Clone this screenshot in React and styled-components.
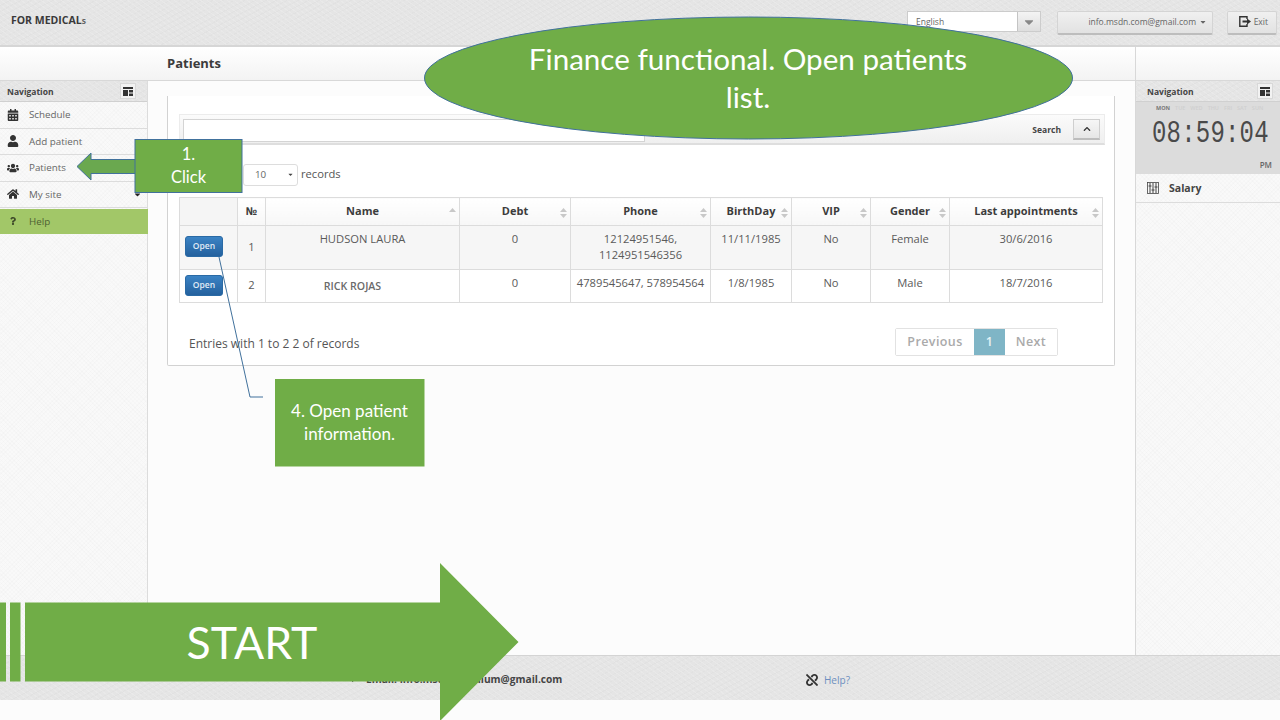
import React from "react";
import styled, { createGlobalStyle, css } from "styled-components";
import { FaCalendarAlt, FaUser, FaUsers, FaHome, FaQuestion, FaUnlink, FaChevronUp, FaCaretDown, FaCaretRight } from "react-icons/fa";

const Global = createGlobalStyle`
  html, body { margin: 0; padding: 0; background: #fcfcfc; }
  * { box-sizing: border-box; }
  body { font-family: "Open Sans", "Liberation Sans", sans-serif; color: #444; }
`;
const paper = css`
  background-color: #e5e5e5;
  background-image:
    repeating-linear-gradient(37deg, rgba(255,255,255,.16) 0 1px, transparent 1px 4px),
    repeating-linear-gradient(-28deg, rgba(0,0,0,.014) 0 1px, transparent 1px 5px);
`;
const weave = css`
  background-color: #f9f9f9;
  background-image:
    repeating-linear-gradient(45deg, rgba(0,0,0,.012) 0 1px, transparent 1px 3px),
    repeating-linear-gradient(-45deg, rgba(0,0,0,.012) 0 1px, transparent 1px 3px);
`;
const Page = styled.div`
  position: relative; width: 1280px; height: 720px; overflow: hidden; background: #fcfcfc;
  display: flex; flex-direction: column;
`;
const Header = styled.header`
  height: 47px; flex: none; ${paper}; border-bottom: 2px solid #d6d6d6;
  display: flex; align-items: flex-start; padding: 11px 3px 0 11px;
`;
const Brand = styled.div`
  font-size: 10.5px; font-weight: 700; color: #3a3a3a; line-height: 19px; margin-right: auto;
  small { font-size: 8.5px; color: #666; }
`;
const LangSelect = styled.div`
  width: 134px; height: 21px; background: #fff; border: 1px solid #ccc; display: flex; align-items: center;
  margin-right: 16px; font-size: 8.5px; color: #666; padding-left: 8px;
  span { flex: 1; }
`;
const LangArrow = styled.div`
  width: 23px; height: 100%; background: linear-gradient(#f4f4f4, #dedede); border-left: 1px solid #c4c4c4;
  display: flex; align-items: center; justify-content: center; color: #888; font-size: 14px;
`;
const HeadButton = styled.div`
  width: ${p => p.$w}px; height: 24px; margin-right: ${p => p.$mr || 0}px;
  background: linear-gradient(#f0f0f0, #e2e2e2); border: 1px solid #d4d4d4; border-bottom: 2px solid #bdbdbd; border-radius: 2px;
  display: flex; align-items: center; justify-content: flex-end; gap: 3px; padding: 0 ${p => p.$pr}px 2px 0;
  font-size: 8.5px; color: #666;
`;
const Body = styled.div`
  flex: none; height: 608px; display: grid; grid-template-columns: 1135px 145px;
`;
const LeftArea = styled.div`display: flex; flex-direction: column; min-width: 0;`;
const TitleBar = styled.div`
  height: 34px; flex: none; background: linear-gradient(#fff, #f3f3f3); border-bottom: 1px solid #d8d8d8;
  padding-left: 167px; font-size: 13px; font-weight: 700; color: #3c3c3c; line-height: 32px;
`;
const Columns = styled.div`flex: 1; display: flex; min-height: 0;`;
const Sidebar = styled.nav`
  width: 148px; flex: none; ${weave}; border-right: 1px solid #dcdcdc;
`;
const NavHead = styled.div`
  height: 21px; ${paper}; border-bottom: 1px solid #d0d0d0; display: flex; align-items: center; justify-content: space-between;
  padding: 0 ${p => p.$pr}px 0 ${p => p.$pl}px; font-size: 8.5px; font-weight: 700; color: #444;
`;
const Toggle = styled.div`
  width: 16px; height: 16px; background: #f2f2f2; border: 1px solid #d8d8d8; display: flex; align-items: center; justify-content: center;
`;
const NavItem = styled.div`
  height: ${p => p.$h || 26.5}px; display: flex; align-items: center; padding-left: 7px; gap: 10px;
  border-bottom: 1px solid #dcdcdc; font-size: 9.8px; color: ${p => p.$active ? "#4e5f33" : "#666"};
  background: ${p => p.$active ? "#a2c768" : "transparent"};
  border-color: ${p => p.$active ? "#a2c768" : "#dcdcdc"};
  margin-top: ${p => p.$mt || 0}px; margin-right: ${p => p.$active ? -1 : 0}px;
`;
const NavIcon = styled.span`
  flex: none; display: flex; width: 12px; height: 12px; align-items: center; justify-content: center;
  svg { width: ${p => p.$size || 12}px; height: ${p => p.$size || 12}px; color: ${p => p.$dark ? "#3f4a2a" : "#333"}; }
`;
const NavCaret = styled(FaCaretDown)`
  margin-left: auto; margin-right: 5px; width: 9px; height: 9px; color: #222;
`;
const Main = styled.main`flex: 1; min-width: 0; background: #fcfcfc; padding: 15px 20px 0 19px;`;
const Panel = styled.section`
  height: 270px; background: #fff; border: 1px solid #d2d2d2; border-top: none; border-radius: 0 0 2px 2px; padding: 18px 11px 0 11px;
`;
const SearchBar = styled.div`
  width: 926px; height: 31px; background: linear-gradient(#fbfbfb, #efefef); border: 1px solid #ececec; border-bottom: 2px solid #dedede;
  display: flex; align-items: center; padding: 2px 4px 0 3px; font-size: 8.5px; font-weight: 700; color: #444;
`;
const SearchInput = styled.div`
  width: 462px; height: 23px; background: #fff; border: 1px solid #d4d4d4; margin-right: auto;
`;
const SearchLabel = styled.span`margin-bottom: 2px;`;
const Collapse = styled.div`
  width: 27px; height: 21px; margin: 0 0 2px 12px; background: linear-gradient(#f6f6f6, #e6e6e6); border: 1px solid #cfcfcf; border-bottom: 2px solid #bdbdbd;
  display: flex; align-items: center; justify-content: center; color: #333; font-size: 8px;
`;
const RecordsRow = styled.div`
  display: flex; align-items: center; gap: 3px; margin: 19px 0 0 64px; height: 22px; font-size: 11.2px; color: #555;
`;
const RecordsLabel = styled.span`margin-top: -3px;`;
const PageSize = styled.div`
  width: 55px; height: 22px; border: 1px solid #ddd; border-radius: 3px; background: #fff; display: flex; align-items: center; justify-content: space-between;
  padding: 0 3px 2px 11px; font-size: 9.8px; color: #666; svg { width: 7px; height: 7px; color: #444; }
`;
const Table = styled.table`
  margin-top: 11px; width: 923px; table-layout: fixed; border-collapse: collapse; font-size: 11.2px; color: #5a5a5a; border: 1px solid #dcdcdc;
`;
const Th = styled.th`
  height: 28px; position: relative; padding: 0 0 2px; background: ${p => p.$plain ? "#f5f5f5" : "linear-gradient(#fff,#f7f7f7)"};
  border: 1px solid #dcdcdc; font-size: 11px; font-weight: 700; color: #3c3c3c; text-align: center;
`;
const SortMark = styled.svg`
  position: absolute; right: 3px; top: 10px; width: 7px; height: 10px; color: #c8c8c8;
`;
const Tr = styled.tr`
  height: ${p => p.$h}px; background: ${p => p.$odd ? "#f6f6f6" : "#fff"};
`;
const Td = styled.td`
  border: 1px solid #dcdcdc; text-align: center; vertical-align: ${p => p.$mid ? "middle" : "top"}; padding: ${p => p.$mid ? "0 0 2px" : "5px 0 0"};
  line-height: 16px; color: #5a5a5a;
`;
const SmallName = styled.span`
  display: block; margin: 3px 20px 0 0; font-size: 10.6px; font-weight: 600; color: #6a6a6a;
`;
const OpenButton = styled.div`
  width: 38px; height: 21px; margin-left: 5px; border-radius: 3px; background: linear-gradient(#3b83c4, #24619e); border: 1px solid #2a6aa5;
  color: #e0ebf5; font-size: 8.5px; font-weight: 600; line-height: 18px; text-align: center;
`;
const FootRow = styled.div`
  display: flex; justify-content: space-between; align-items: center; margin-top: 25px; padding: 0 45px 0 10px; font-size: 12px; color: #555;
`;
const Entries = styled.span`padding-top: 2px;`;
const Pager = styled.div`display: flex; height: 28px; border: 1px solid #e2e2e2; border-radius: 2px;`;
const PageBtn = styled.div`
  width: ${p => p.$w}px; display: flex; align-items: center; justify-content: center; font-size: 12.5px; font-weight: 600; letter-spacing: .4px;
  padding-bottom: 2px;
  color: ${p => p.$on ? "#e6f2f5" : "#aaa"}; background: ${p => p.$on ? "#7fb5c6" : "#fff"};
`;
const RightSide = styled.aside`
  display: flex; flex-direction: column; border-left: 1px solid #d8d8d8; ${weave};
`;
const RightTitle = styled.div`height: 34px; flex: none; background: linear-gradient(#fff,#f3f3f3); border-bottom: 1px solid #d8d8d8;`;
const Clock = styled.div`
  height: 72px; background: #dcdcdc; padding: 2px 8px 4px 20px; display: flex; flex-direction: column;
`;
const Days = styled.div`
  display: flex; gap: 5px; font-size: 5.5px; color: #cfcfcf; font-weight: 600; b { color: #777; font-weight: 700; }
`;
const Time = styled.div`
  font-family: "Liberation Mono", monospace; font-size: 24px; line-height: 24px; margin: 10px 0 0 -4px; color: #4a4a4a; letter-spacing: .2px; white-space: nowrap;
  transform: scaleY(1.3);
`;
const Meridiem = styled.div`font-size: 8px; font-weight: 600; color: #666; text-align: right; margin-top: auto;`;
const SalaryRow = styled.div`
  height: 27px; margin-top: 2px; display: flex; align-items: center; padding: 0 0 2px 11px; gap: 10px; border-bottom: 1px solid #dcdcdc; font-size: 10.5px; font-weight: 700; color: #444;
`;
const Footer = styled.footer`
  height: 45px; flex: none; ${paper}; border-top: 1px solid #d4d4d4; position: relative;
  display: flex; align-items: center; padding: 2px 0 0 349px; font-size: 10.2px; font-weight: 700; color: #444;
`;
const Email = styled.div`
  width: 457px; display: flex; align-items: center; gap: 7px; svg { width: 10px; height: 10px; color: #222; }
`;
const HelpLink = styled.div`
  display: flex; align-items: center; gap: 6px; font-weight: 400; color: #6d8fc0; font-size: 10px; padding-top: 1px; svg { width: 12px; height: 12px; color: #333; }
`;
const Overlay = styled.svg`
  position: absolute; left: 0; top: 0; width: 1280px; height: 720px; pointer-events: none;
`;
const Bubble = styled.div`
  position: absolute; left: ${p => p.$x}px; top: ${p => p.$y}px; width: ${p => p.$w}px; height: ${p => p.$h}px;
  display: flex; align-items: center; justify-content: center; text-align: center; color: #fff;
  font-family: Lato, "Open Sans", sans-serif; font-size: ${p => p.$fs}px; line-height: ${p => p.$lh}px;
  padding: ${p => p.$pad || "0"};
`;

const Sort = ({ up }) => (
  <SortMark viewBox="0 0 7 10">
    <path d="M3.5 0L7 4H0z" fill="currentColor" />
    {!up && <path d="M3.5 10L7 6H0z" fill="currentColor" />}
  </SortMark>
);
const LayoutIcon = () => (
  <svg width="10" height="9" viewBox="0 0 10 9"><path d="M0 0h10v2H0zM0 3h5v6H0zM6 3h4v2.500H6zM6 6.500h4V9H6z" fill="#333" /></svg>
);
const SalaryIcon = () => (
  <svg width="12" height="12" viewBox="0 0 12 12" fill="none" stroke="#444">
    <rect x=".5" y=".5" width="11" height="11" strokeWidth=".8" />
    <path d="M3 1v10M6 1v10M9 1v10M1.500 4h3M4.500 8h3M7.500 5h3" strokeWidth="1" />
  </svg>
);
const ExitIcon = () => (
  <svg width="12" height="11" viewBox="0 0 12 11" fill="none" stroke="#333" strokeWidth="1.400">
    <path d="M8 3V.8H.8v9.400H8V8" />
    <path d="M3.500 5.500H9" strokeWidth="2" />
    <path d="M8 2.500L12 5.500 8 8.500z" fill="#333" stroke="none" />
  </svg>
);

const cols = [58, 28, 194, 111, 140, 81, 79, 79, 153];
const heads = [
  ["", false], ["№", false], ["Name", true, "up"], ["Debt", true], ["Phone", true], ["BirthDay", true], ["VIP", true], ["Gender", true], ["Last appointments", true],
];
const nav = [
  [FaCalendarAlt, "Schedule"], [FaUser, "Add patient"], [FaUsers, "Patients"], [FaHome, "My site", true],
];

export default function App() {
  return (
    <Page>
      <Global />
      <Header>
        <Brand>FOR MEDICAL<small>s</small></Brand>
        <LangSelect><span>English</span><LangArrow><FaCaretDown /></LangArrow></LangSelect>
        <HeadButton $w={156} $mr={14} $pr={5}>info.msdn.com@gmail.com <FaCaretDown size={8} /></HeadButton>
        <HeadButton $w={50} $pr={8}><ExitIcon /> Exit</HeadButton>
      </Header>
      <Body>
        <LeftArea>
          <TitleBar>Patients</TitleBar>
          <Columns>
            <Sidebar>
              <NavHead $pl={7} $pr={11}>Navigation <Toggle><LayoutIcon /></Toggle></NavHead>
              {nav.map(([Icon, label, more]) => (
                <NavItem key={label}><NavIcon><Icon /></NavIcon>{label}{more && <NavCaret />}</NavItem>
              ))}
              <NavItem $active $h={25} $mt={1}><NavIcon $size={8} $dark><FaQuestion /></NavIcon>Help</NavItem>
            </Sidebar>
            <Main>
              <Panel>
                <SearchBar>
                  <SearchInput />
                  <SearchLabel>Search</SearchLabel>
                  <Collapse><FaChevronUp /></Collapse>
                </SearchBar>
                <RecordsRow>
                  <PageSize>10 <FaCaretDown /></PageSize> <RecordsLabel>records</RecordsLabel>
                </RecordsRow>
                <Table>
                  <colgroup>{cols.map((w, i) => <col key={i} style={{ width: w }} />)}</colgroup>
                  <thead>
                    <tr>
                      {heads.map(([h, s, up], i) => (
                        <Th key={i} $plain={i === 0}>{h}{s && <Sort up={up} />}</Th>
                      ))}
                    </tr>
                  </thead>
                  <tbody>
                    <Tr $h={44} $odd>
                      <Td $mid><OpenButton>Open</OpenButton></Td>
                      <Td $mid>1</Td>
                      <Td>HUDSON LAURA</Td>
                      <Td>0</Td>
                      <Td>12124951546,<br />1124951546356</Td>
                      <Td>11/11/1985</Td>
                      <Td>No</Td>
                      <Td>Female</Td>
                      <Td>30/6/2016</Td>
                    </Tr>
                    <Tr $h={33}>
                      <Td $mid><OpenButton>Open</OpenButton></Td>
                      <Td $mid>2</Td>
                      <Td><SmallName>RICK ROJAS</SmallName></Td>
                      <Td>0</Td>
                      <Td>4789545647, 578954564</Td>
                      <Td>1/8/1985</Td>
                      <Td>No</Td>
                      <Td>Male</Td>
                      <Td>18/7/2016</Td>
                    </Tr>
                  </tbody>
                </Table>
                <FootRow>
                  <Entries>Entries with 1 to 2 2 of records</Entries>
                  <Pager>
                    <PageBtn $w={78}>Previous</PageBtn>
                    <PageBtn $w={31} $on>1</PageBtn>
                    <PageBtn $w={52}>Next</PageBtn>
                  </Pager>
                </FootRow>
              </Panel>
            </Main>
          </Columns>
        </LeftArea>
        <RightSide>
          <RightTitle />
          <NavHead $pl={11} $pr={7}>Navigation <Toggle><LayoutIcon /></Toggle></NavHead>
          <Clock>
            <Days><b>MON</b><span>TUE</span><span>WED</span><span>THU</span><span>FRI</span><span>SAT</span><span>SUN</span></Days>
            <Time>08:59:04</Time>
            <Meridiem>PM</Meridiem>
          </Clock>
          <SalaryRow><SalaryIcon />Salary</SalaryRow>
        </RightSide>
      </Body>
      <Footer>
        <Email><FaCaretRight />Email: info.msdn.premium@gmail.com</Email>
        <HelpLink><FaUnlink />Help?</HelpLink>
      </Footer>

      <Overlay viewBox="0 0 1280 720">
        <ellipse cx="748.500" cy="78" rx="324" ry="61" fill="#70ad47" stroke="#41719c" strokeWidth="1" />
        <path d="M135 159.500H91V153L77 166.500L91 180V173.500H135" fill="#6aa84f" stroke="#41719c" strokeWidth="1" />
        <rect x="135" y="139.500" width="107" height="53" fill="#70ad47" stroke="#41719c" strokeWidth="1" />
        <rect x="275" y="379" width="149.500" height="87.500" fill="#70ad47" />
        <path d="M219 257L250 397H263" fill="none" stroke="#41719c" strokeWidth="1" />
        <path d="M25 602.500H440V563L518.500 642L440 721V681.500H25z" fill="#70ad47" />
        <path d="M0 602.500h6v79H0zM10 602.500h10.500v79H10z" fill="#70ad47" />
      </Overlay>
      <Bubble $x={510} $y={38} $w={476} $h={80} $fs={29.6} $lh={38}>Finance functional. Open patients list.</Bubble>
      <Bubble $x={135} $y={139} $w={107} $h={54} $fs={16.5} $lh={23}>1.<br />Click</Bubble>
      <Bubble $x={275} $y={378} $w={149} $h={87} $fs={17} $lh={23} $pad="0 8px">4. Open patient information.</Bubble>
      <Bubble $x={25} $y={602} $w={454} $h={79} $fs={44.6} $lh={80}>START</Bubble>
    </Page>
  );
}
